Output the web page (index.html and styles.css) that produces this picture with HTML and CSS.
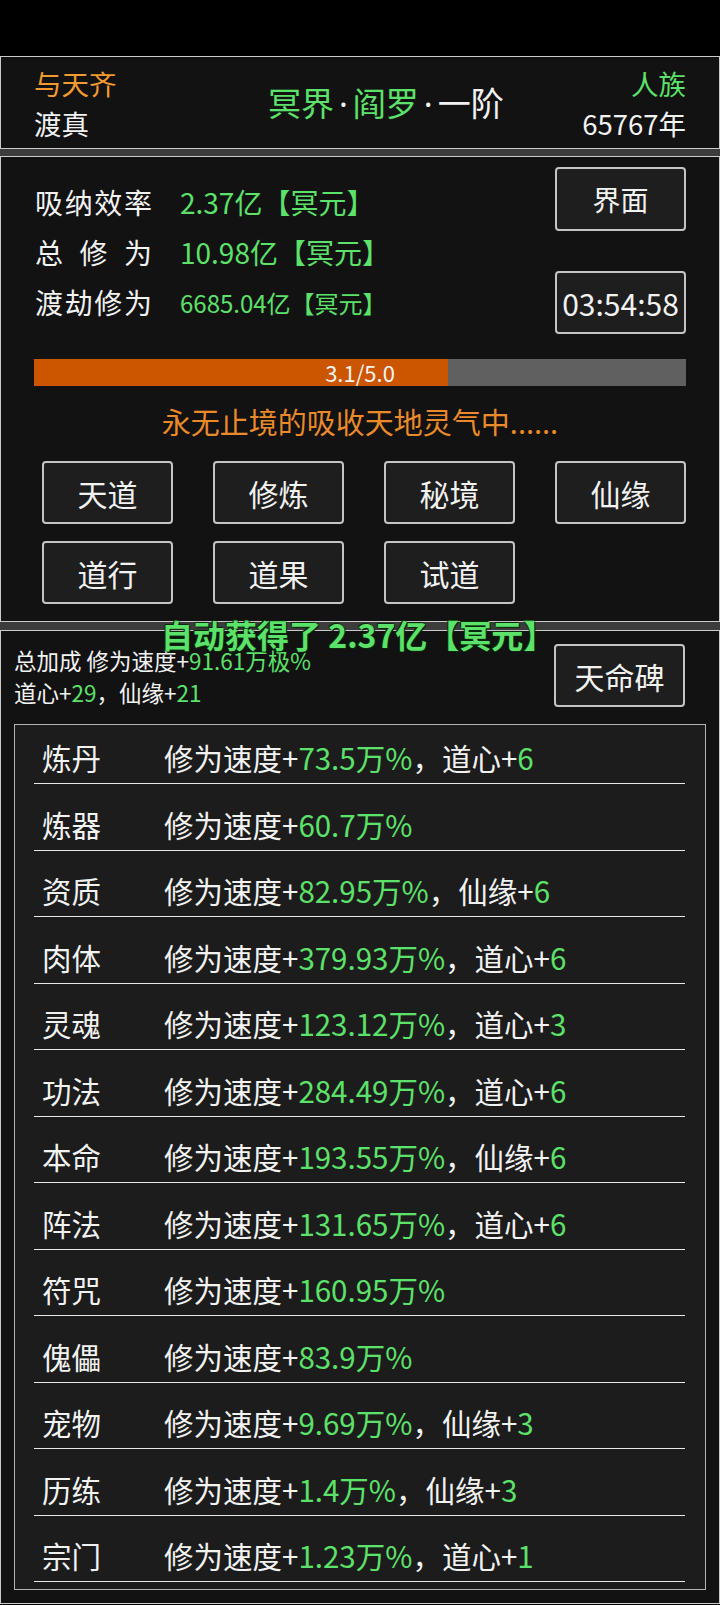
FILE: index.html
```html
<!DOCTYPE html>
<html lang="zh">
<head>
<meta charset="utf-8">
<title>修仙</title>
<link rel="stylesheet" href="styles.css">
</head>
<body>
<div class="page">
  <div class="topbar"></div>
  <div class="panel head">
    <div class="head-left">
      <div class="orange">与天齐</div>
      <div>渡真</div>
    </div>
    <div class="title"><span class="g">冥界</span><span class="dot">·</span><span class="g">阎罗</span><span class="dot">·</span>一阶</div>
    <div class="head-right">
      <div class="g">人族</div>
      <div>65767年</div>
    </div>
  </div>
  <div class="band"></div>
  <div class="panel main">
    <div class="main-top">
      <div class="stats">
        <div class="stat"><span class="label">吸纳效率</span><span class="g">2.37亿【冥元】</span></div>
        <div class="stat"><span class="label">总修为</span><span class="g">10.98亿【冥元】</span></div>
        <div class="stat"><span class="label">渡劫修为</span><span class="g small">6685.04亿【冥元】</span></div>
      </div>
      <div class="side">
        <div class="btn side-btn">界面</div>
        <div class="btn side-btn timer">03:54:58</div>
      </div>
    </div>
    <div class="bar">
      <div class="bar-fill" style="width: 63.5%"></div>
      <div class="bar-text">3.1/5.0</div>
    </div>
    <div class="msg">永无止境的吸收天地灵气中......</div>
    <div class="grid">
      <div class="btn gbtn">天道</div>
      <div class="btn gbtn">修炼</div>
      <div class="btn gbtn">秘境</div>
      <div class="btn gbtn">仙缘</div>
      <div class="btn gbtn">道行</div>
      <div class="btn gbtn">道果</div>
      <div class="btn gbtn">试道</div>
    </div>
  </div>
  <div class="band band2"></div>
  <div class="panel bonus">
    <div class="toast">自动获得了 2.37亿【冥元】</div>
    <div class="bonus-top">
      <div class="summary">
        <div>总加成 修为速度+<span class="g">91.61万极%</span></div>
        <div>道心+<span class="g">29</span>，仙缘+<span class="g">21</span></div>
      </div>
      <div class="btn stele">天命碑</div>
    </div>
    <div class="list">
      <div class="item"><span class="name">炼丹</span><span>修为速度+<span class="g">73.5万%</span>，道心+<span class="g">6</span></span></div>
      <div class="item"><span class="name">炼器</span><span>修为速度+<span class="g">60.7万%</span></span></div>
      <div class="item"><span class="name">资质</span><span>修为速度+<span class="g">82.95万%</span>，仙缘+<span class="g">6</span></span></div>
      <div class="item"><span class="name">肉体</span><span>修为速度+<span class="g">379.93万%</span>，道心+<span class="g">6</span></span></div>
      <div class="item"><span class="name">灵魂</span><span>修为速度+<span class="g">123.12万%</span>，道心+<span class="g">3</span></span></div>
      <div class="item"><span class="name">功法</span><span>修为速度+<span class="g">284.49万%</span>，道心+<span class="g">6</span></span></div>
      <div class="item"><span class="name">本命</span><span>修为速度+<span class="g">193.55万%</span>，仙缘+<span class="g">6</span></span></div>
      <div class="item"><span class="name">阵法</span><span>修为速度+<span class="g">131.65万%</span>，道心+<span class="g">6</span></span></div>
      <div class="item"><span class="name">符咒</span><span>修为速度+<span class="g">160.95万%</span></span></div>
      <div class="item"><span class="name">傀儡</span><span>修为速度+<span class="g">83.9万%</span></span></div>
      <div class="item"><span class="name">宠物</span><span>修为速度+<span class="g">9.69万%</span>，仙缘+<span class="g">3</span></span></div>
      <div class="item"><span class="name">历练</span><span>修为速度+<span class="g">1.4万%</span>，仙缘+<span class="g">3</span></span></div>
      <div class="item"><span class="name">宗门</span><span>修为速度+<span class="g">1.23万%</span>，道心+<span class="g">1</span></span></div>
    </div>
  </div>
</div>
</body>
</html>
```

FILE: styles.css
```css
* { box-sizing: border-box; }
html, body {
  margin: 0;
  padding: 0;
  background: #000;
}
body {
  font-family: "Noto Sans CJK SC", "Noto Sans", sans-serif;
  color: #f2f2f2;
  width: 720px;
  height: 1605px;
  overflow: hidden;
}
.page { width: 720px; }
.topbar { height: 56px; background: #000; }
.g { color: #5ce26a; }
.orange { color: #f29a30; }

.panel {
  border: 1px solid #cbcbcb;
  background: #121212;
}
.band {
  height: 7px;
  background: #3c3c3c;
}
.band2 { height: 8px; }

/* header */
.head {
  height: 93px;
  padding: 6px 33px 5px 33px;
  display: grid;
  grid-template-columns: 234px auto 1fr;
  align-items: center;
  font-size: 27.5px;
  line-height: 40px;
}
.title {
  font-size: 33px;
  line-height: 40px;
  white-space: nowrap;
}
.dot {
  font-family: "Noto Sans", sans-serif;
  margin: 0 5px;
  color: #f2f2f2;
}
.head-right { text-align: right; }

/* main */
.main {
  height: 466px;
  padding: 10px 33px 16px 33px;
}
.main-top {
  display: flex;
  justify-content: space-between;
}
.stats { padding-top: 10px; }
.stat {
  display: flex;
  align-items: center;
  height: 50px;
  font-size: 28px;
  white-space: nowrap;
}
.label {
  width: 117px;
  margin-left: 1px;
  margin-right: 28px;
  text-align: justify;
  text-align-last: justify;
}
.small { font-size: 24px; }
.side {
  display: flex;
  flex-direction: column;
  gap: 40px;
}
.btn {
  border: 2px solid #c4c4c4;
  border-radius: 4px;
  background: #1e1e1e;
  display: flex;
  align-items: center;
  justify-content: center;
  color: #f2f2f2;
}
.side-btn {
  width: 131px;
  height: 64px;
  font-size: 28px;
}
.timer {
  height: 63px;
  font-size: 30px;
}
.bar {
  position: relative;
  margin-top: 25px;
  height: 27px;
  background: #606060;
}
.bar-fill {
  height: 100%;
  background: #cc5500;
}
.bar-text {
  position: absolute;
  left: 0;
  right: 0;
  top: 0;
  text-align: center;
  font-size: 22px;
  line-height: 27px;
  color: #f4f4f4;
}
.msg {
  margin-top: 15px;
  line-height: 40px;
  text-align: center;
  font-size: 29px;
  color: #ea8a2a;
}
.grid {
  margin-top: 20px;
  padding-left: 8px;
  display: grid;
  grid-template-columns: repeat(4, 131px);
  column-gap: 40px;
  row-gap: 17px;
}
.gbtn {
  height: 63px;
  font-size: 30px;
}

/* bonus */
.bonus {
  position: relative;
  height: 974px;
  padding: 13px 13px 14px 13px;
}
.toast {
  position: absolute;
  left: 160px;
  top: -17px;
  line-height: 40px;
  font-size: 32px;
  font-weight: bold;
  color: #5ce26a;
  white-space: nowrap;
  text-shadow: 0 0 2px #0a2a0a, 1px 1px 0 #0a2a0a, -1px -1px 0 #0a2a0a;
}
.bonus-top {
  display: flex;
  justify-content: space-between;
  align-items: flex-start;
}
.summary {
  font-size: 22.5px;
  line-height: 32px;
  white-space: nowrap;
}
.stele {
  width: 131px;
  height: 63px;
  margin-right: 21px;
  font-size: 30px;
}
.list {
  margin-top: 16px;
  border: 1px solid #b4b4b4;
  background: #1c1c1c;
  padding: 0 20px 7px 19px;
}
.item {
  display: flex;
  align-items: center;
  padding: 21.5px 0 8px 0;
  line-height: 36px;
  font-size: 29.5px;
  border-bottom: 1px solid #e8e8e8;
  white-space: nowrap;
}
.item:first-child { padding-top: 14px; }
.name {
  width: 130px;
  padding-left: 8px;
}
```
